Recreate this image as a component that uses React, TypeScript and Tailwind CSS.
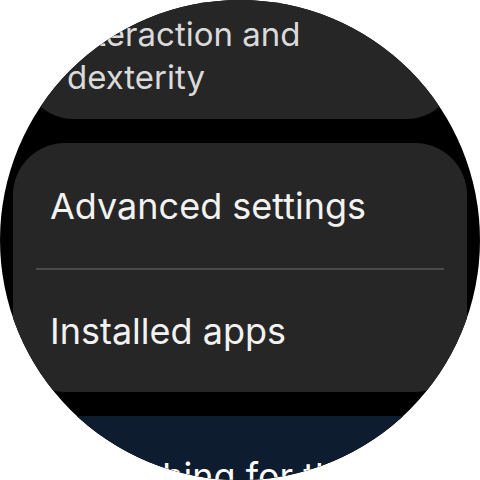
export default function App() {
  return (
    <div className="w-[480px] h-[480px] bg-white">
      <div
        className="w-[480px] h-[480px] rounded-full overflow-hidden bg-black flex flex-col items-center"
        style={{ fontFamily: "Inter, Roboto, 'Noto Sans', sans-serif" }}
      >
        {/* Scrolled-off item */}
        <div className="w-[430px] h-[160px] -mt-[41px] shrink-0 rounded-[48px] bg-[#262626] flex items-end pl-[42px] pr-[43px] pb-[20px]">
          <p className="text-[33px] leading-[43px] text-[#dadada]">Interaction and dexterity</p>
        </div>

        {/* Settings group */}
        <div className="w-[454px] mt-[24px] shrink-0 rounded-[52px] bg-[#262626] flex flex-col">
          <div className="h-[125px] flex items-center px-[37px]">
            <span className="text-[36px] text-[#f2f2f2]">Advanced settings</span>
          </div>
          <div className="h-[2px] mx-[23px] bg-[#4a4a4a]" />
          <div className="h-[122px] flex items-center px-[37px]">
            <span className="text-[36px] text-[#f2f2f2]">Installed apps</span>
          </div>
        </div>

        {/* Tip card */}
        <div className="w-[454px] mt-[24px] shrink-0 rounded-[52px] bg-[#0e1c2f] pt-[38px] pb-[40px] pl-[51px] pr-[30px]">
          <p className="text-[36px] leading-[44px] text-white">Searching for the right setting?</p>
        </div>
      </div>
    </div>
  );
}
